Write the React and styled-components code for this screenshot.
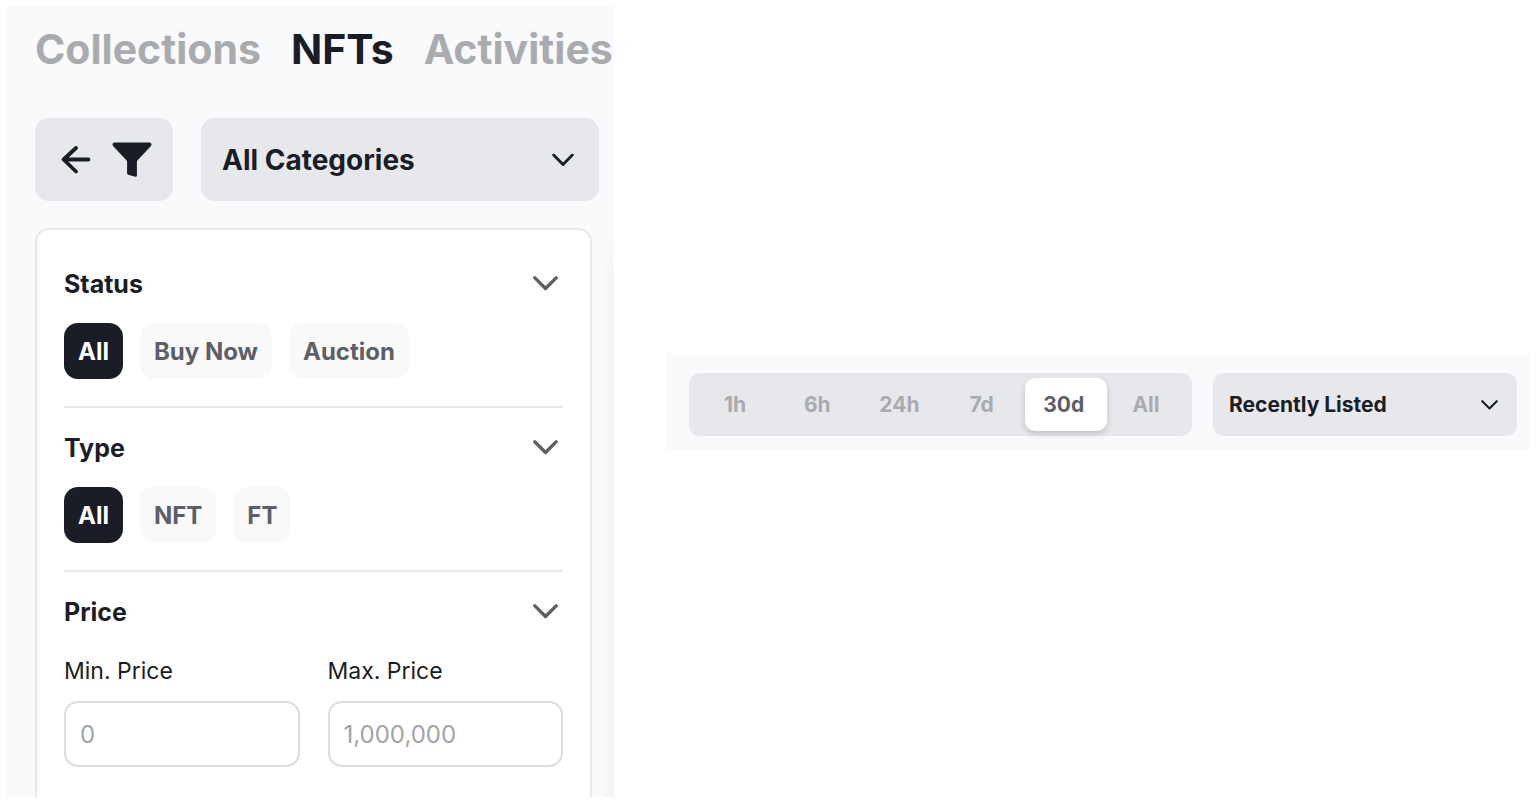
import { useState } from 'react';
import styled, { createGlobalStyle, css } from 'styled-components';

const ink = '#1b1d26';
const grey = '#5e5f66';
const muted = '#aaabaf';
const surface = '#f9fafc';
const fill = '#e7e8ec';

const GlobalStyle = createGlobalStyle`
	*, *::before, *::after {
		box-sizing: border-box;
	}
	body {
		margin: 0;
		background: #ffffff;
		color: ${ink};
		font-family: Inter, 'Liberation Sans', sans-serif;
	}
	button, input, select {
		font: inherit;
	}
`;

// shared reset for every clickable element
const buttonReset = css`
	border: 0;
	padding: 0;
	background: none;
	color: inherit;
	cursor: pointer;
`;

const Page = styled.div`
	display: grid;
	grid-template-columns: minmax(0, 19fr) minmax(0, 27fr);
	column-gap: 53px;
	min-height: 100vh;
	padding: 6px 9px 11px 6px;
`;

const Sidebar = styled.aside`
	display: flex;
	flex-direction: column;
	background: ${surface};
`;

const Tabs = styled.nav`
	display: flex;
	gap: 30px;
	padding: 18px 0 0 29px;
	font-size: 41px;
	line-height: 50px;
	font-weight: 700;
	white-space: nowrap;
`;

const TabLink = styled.a`
	color: ${({ $active }) => ($active ? ink : muted)};
	text-decoration: none;
`;

const Controls = styled.div`
	display: flex;
	gap: 28px;
	padding: 44px 15px 27px 29px;
`;

const FilterButton = styled.button`
	${buttonReset}
	display: flex;
	align-items: center;
	justify-content: space-between;
	width: 138px;
	height: 83px;
	padding: 0 21px 0 26px;
	border-radius: 14px;
	background: ${fill};
`;

const SelectBox = styled.div`
	position: relative;
	flex: 1;
	min-width: 0;
	svg {
		position: absolute;
		top: 50%;
		right: ${({ $small }) => ($small ? '19px' : '25px')};
		transform: translateY(-50%);
		pointer-events: none;
	}
`;

const Select = styled.select`
	appearance: none;
	width: 100%;
	height: ${({ $small }) => ($small ? '63px' : '83px')};
	padding: ${({ $small }) => ($small ? '0 48px 0 16px' : '0 60px 0 21px')};
	border: 0;
	border-radius: ${({ $small }) => ($small ? '11px' : '14px')};
	background: ${fill};
	color: ${ink};
	font-size: ${({ $small }) => ($small ? '21px' : '28px')};
	font-weight: 700;
	cursor: pointer;
`;

const FilterArea = styled.div`
	display: flex;
	flex: 1;
	padding: 0 22px 0 29px;
	background:
		linear-gradient(${surface}, rgba(249, 250, 252, 0) 60px),
		linear-gradient(to left, #f1f2f4, ${surface} 12px);
`;

const FilterCard = styled.form`
	flex: 1;
	min-width: 0;
	padding: 14px 27px 30px;
	border: 2px solid ${fill};
	border-bottom: 0;
	border-radius: 14px 14px 0 0;
	background: #ffffff;
`;

const Section = styled.section`
	padding-bottom: 27px;
	& + & {
		border-top: 2px solid #e9e9ec;
	}
	&:last-child {
		padding-bottom: 0;
	}
`;

const SectionHeader = styled.button`
	${buttonReset}
	display: flex;
	align-items: center;
	justify-content: space-between;
	width: 100%;
	height: 79px;
	padding-right: 5px;
	font-size: 25px;
	font-weight: 700;
`;

const Chips = styled.div`
	display: flex;
	flex-wrap: wrap;
	gap: 17px;
`;

const Chip = styled.button`
	${buttonReset}
	height: 56px;
	padding: 0 14px;
	border-radius: 14px;
	background: ${({ $active }) => ($active ? ink : '#f9f9fa')};
	color: ${({ $active }) => ($active ? '#ffffff' : grey)};
	font-size: 24px;
	font-weight: 700;
`;

const PriceRow = styled.div`
	display: grid;
	grid-template-columns: 1fr 1fr;
	gap: 28px;
	padding-top: 4px;
`;

const Field = styled.label`
	display: flex;
	flex-direction: column;
	gap: 14px;
	min-width: 0;
	font-size: 23px;
	line-height: 32px;
`;

const Input = styled.input`
	width: 100%;
	height: 66px;
	padding: 0 14px;
	border: 2px solid #dcdcde;
	border-radius: 14px;
	background: #ffffff;
	color: ${ink};
	font-size: 24px;
	&::placeholder {
		color: #a0a3ab;
		opacity: 1;
	}
`;

const Toolbar = styled.section`
	align-self: center;
	display: flex;
	gap: 21px;
	padding: 20px 14px 14px 22px;
	background: ${surface};
`;

const Periods = styled.div`
	flex: 0 1 503px;
	display: grid;
	grid-template-columns: repeat(6, minmax(0, 1fr));
	height: 63px;
	padding: 5px 3px 5px 7px;
	border-radius: 11px;
	background: ${fill};
`;

const Period = styled.button`
	${buttonReset}
	padding-right: 4px;
	border-radius: 10px;
	color: ${muted};
	font-size: 21px;
	font-weight: 700;
	${({ $active }) =>
		$active &&
		css`
			background: #ffffff;
			color: ${grey};
			box-shadow: 0 3px 6px rgba(27, 29, 38, 0.18);
		`}
`;

const ArrowIcon = () => (
	<svg width="30" height="28" viewBox="0 0 30 28" fill="none" stroke={ink} strokeWidth="3.8" strokeLinecap="round" strokeLinejoin="round">
		<path d="M27.5 13.5H3M15 2 2.6 13.5 15 25.5" />
	</svg>
);

const FunnelIcon = () => (
	<svg width="40" height="36" viewBox="0 0 40 36" fill={ink}>
		<path d="M2.6.5h34.8a2 2 0 0 1 1.5 3.4L25.4 18.5a2 2 0 0 0-.5 1.300v13.700a1.300 1.300 0 0 1-1.700 1.200l-7-2a1.500 1.500 0 0 1-1.100-1.500V19.800a2 2 0 0 0-.5-1.300L1.100 3.900A2 2 0 0 1 2.600.5Z" />
	</svg>
);

const Chevron = ({ width, color = ink, stroke }) => (
	<svg width={width} height={width * 0.6} viewBox="0 0 20 12" fill="none" stroke={color} strokeWidth={stroke} strokeLinecap="round" strokeLinejoin="round">
		<path d="M1.5 1.5 10 10l8.5-8.5" />
	</svg>
);

const ChipSection = ({ title, options }) => {
	const [selected, setSelected] = useState(options[0]);
	return (
		<Section>
			<SectionHeader type="button">
				{title}
				<Chevron width={25} color={grey} stroke={2.7} />
			</SectionHeader>
			<Chips>
				{options.map((option) => (
					<Chip
						key={option}
						type="button"
						$active={option === selected}
						aria-pressed={option === selected}
						onClick={() => setSelected(option)}
					>
						{option}
					</Chip>
				))}
			</Chips>
		</Section>
	);
};

const tabs = ['Collections', 'NFTs', 'Activities'];
const periods = ['1h', '6h', '24h', '7d', '30d', 'All'];

const App = () => {
	const [period, setPeriod] = useState('30d');
	return (
		<>
			<GlobalStyle />
			<Page>
				<Sidebar>
					<Tabs>
						{tabs.map((tab) => (
							<TabLink key={tab} href={`#${tab.toLowerCase()}`} $active={tab === 'NFTs'}>
								{tab}
							</TabLink>
						))}
					</Tabs>
					<Controls>
						<FilterButton type="button" aria-label="Hide filters">
							<ArrowIcon />
							<FunnelIcon />
						</FilterButton>
						<SelectBox>
							<Select aria-label="Category">
								<option>All Categories</option>
							</Select>
							<Chevron width={22} stroke={2.6} />
						</SelectBox>
					</Controls>
					<FilterArea>
						<FilterCard>
							<ChipSection title="Status" options={['All', 'Buy Now', 'Auction']} />
							<ChipSection title="Type" options={['All', 'NFT', 'FT']} />
							<Section>
								<SectionHeader type="button">
									Price
									<Chevron width={25} color={grey} stroke={2.7} />
								</SectionHeader>
								<PriceRow>
									<Field>
										Min. Price
										<Input placeholder="0" inputMode="decimal" />
									</Field>
									<Field>
										Max. Price
										<Input placeholder="1,000,000" inputMode="decimal" />
									</Field>
								</PriceRow>
							</Section>
						</FilterCard>
					</FilterArea>
				</Sidebar>
				<Toolbar>
					<Periods>
						{periods.map((item) => (
							<Period
								key={item}
								type="button"
								$active={item === period}
								aria-pressed={item === period}
								onClick={() => setPeriod(item)}
							>
								{item}
							</Period>
						))}
					</Periods>
					<SelectBox $small>
						<Select $small aria-label="Sort by">
							<option>Recently Listed</option>
						</Select>
						<Chevron width={17} stroke={2.5} />
					</SelectBox>
				</Toolbar>
			</Page>
		</>
	);
};

export default App;
